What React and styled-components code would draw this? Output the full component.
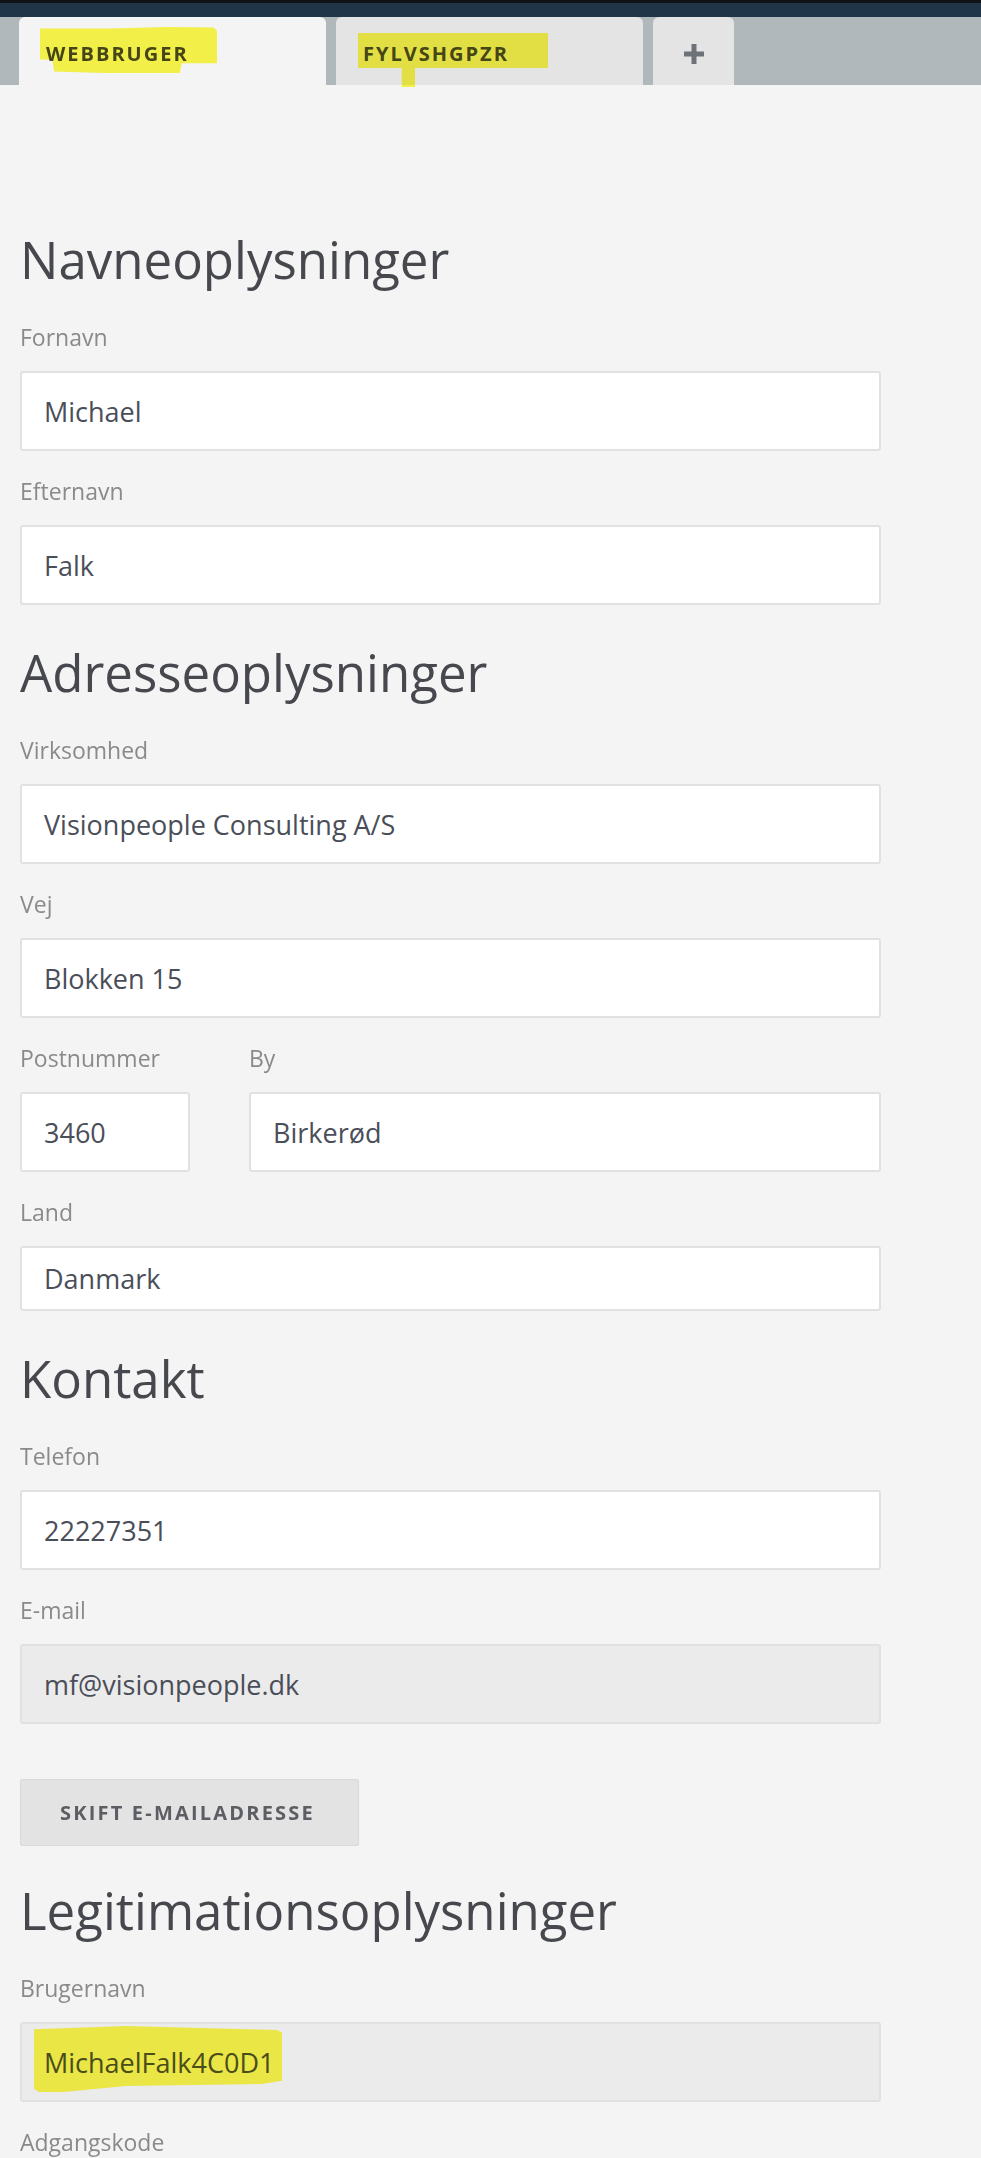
import React from 'react';
import styled, { createGlobalStyle } from 'styled-components';

const GlobalStyle = createGlobalStyle`
  html, body {
    margin: 0;
    padding: 0;
  }
  body {
    background: #f4f4f4;
    font-family: 'Open Sans', 'Noto Sans', Arial, sans-serif;
  }
`;

const TopBar = styled.div`
  height: 14px;
  background: #213549;
  border-top: 3px solid #0f1317;
`;

const TabStrip = styled.nav`
  display: flex;
  gap: 10px;
  height: 68px;
  padding-left: 19px;
  background: #b0b8bb;
`;

const Tab = styled.div`
  position: relative;
  display: flex;
  align-items: center;
  justify-content: ${p => (p.$center ? 'center' : 'flex-start')};
  box-sizing: border-box;
  width: ${p => p.$width}px;
  padding: 6px 0 0 ${p => (p.$center ? 0 : 27)}px;
  background: ${p => (p.$active ? '#f4f4f4' : '#e4e4e4')};
  border-radius: 6px 6px 0 0;
`;

const TabText = styled.span`
  font-size: 20px;
  line-height: 24px;
  font-weight: 700;
  letter-spacing: 2px;
  color: #45464a;
`;

// highlighter pen strokes drawn over the screenshot
const Marker = styled.span`
  position: absolute;
  left: ${p => p.$x}px;
  top: ${p => p.$y}px;
  width: ${p => p.$w}px;
  height: ${p => p.$h}px;
  background: #fdfa4c;
  mix-blend-mode: multiply;
  clip-path: polygon(${p => p.$shape});
  pointer-events: none;
`;

const Main = styled.main`
  display: flex;
  flex-direction: column;
  width: 861px;
  padding: 135px 20px 40px;
`;

const SectionTitle = styled.h2`
  margin: 9px 0 36px;
  font-size: 51px;
  line-height: 60px;
  font-weight: 400;
  color: #46484e;
`;

const Field = styled.div`
  margin-bottom: 28px;
`;

const FieldRow = styled.div`
  display: grid;
  grid-template-columns: 170px 1fr;
  column-gap: 59px;
`;

const Label = styled.label`
  display: block;
  margin-bottom: 22px;
  font-size: 23px;
  line-height: 24px;
  color: #8a8a8c;
`;

const InputBox = styled.div`
  position: relative;
  display: flex;
  align-items: center;
  box-sizing: border-box;
  height: ${p => p.$height || 80}px;
  padding: 0 22px;
  background: ${p => (p.$disabled ? '#ebebeb' : '#ffffff')};
  border: 2px solid #e1e1e1;
  border-radius: 3px;
  font-size: 27px;
  color: #4a4e59;
`;

const Button = styled.button`
  align-self: flex-start;
  box-sizing: border-box;
  width: 339px;
  height: 67px;
  margin: 27px 0 25px;
  padding: 0 0 0 39px;
  text-align: left;
  background: #e3e3e3;
  border: 1px solid #d9d9d9;
  border-radius: 2px;
  font-family: inherit;
  font-size: 20px;
  font-weight: 700;
  letter-spacing: 2.2px;
  color: #5c5e63;
`;

const PlusIcon = () => (
  <svg width="22" height="22" viewBox="0 0 22 22">
    <rect x="8.5" y="1" width="5" height="20" fill="#6c7278" />
    <rect x="1" y="8.5" width="20" height="5" fill="#6c7278" />
  </svg>
);

const Input = ({ label, value, height, disabled, children }) => (
  <Field>
    <Label>{label}</Label>
    <InputBox $height={height} $disabled={disabled}>
      {value}
      {children}
    </InputBox>
  </Field>
);

export default function App() {
  return (
    <>
      <GlobalStyle />
      <TopBar />
      <TabStrip>
        <Tab $active $width={307}>
          <TabText>WEBBRUGER</TabText>
          <Marker
            $x={21}
            $y={10}
            $w={177}
            $h={46}
            $shape="0% 3%, 40% 3%, 72% 0%, 98% 1%, 100% 8%, 100% 79%, 80% 79%, 79% 100%, 36% 100%, 8% 97%, 7% 72%, 0% 70%"
          />
        </Tab>
        <Tab $width={307}>
          <TabText>FYLVSHGPZR</TabText>
          <Marker
            $x={22}
            $y={16}
            $w={190}
            $h={54}
            $shape="0% 0%, 100% 0%, 100% 65%, 30% 65%, 30% 100%, 23% 100%, 23% 65%, 0% 65%"
          />
        </Tab>
        <Tab $center $width={81}>
          <PlusIcon />
        </Tab>
      </TabStrip>

      <Main>
        <SectionTitle>Navneoplysninger</SectionTitle>
        <Input label="Fornavn" value="Michael" />
        <Input label="Efternavn" value="Falk" />

        <SectionTitle>Adresseoplysninger</SectionTitle>
        <Input label="Virksomhed" value="Visionpeople Consulting A/S" />
        <Input label="Vej" value="Blokken 15" />
        <FieldRow>
          <Input label="Postnummer" value="3460" />
          <Input label="By" value="Birkerød" />
        </FieldRow>
        <Input label="Land" value="Danmark" height={65} />

        <SectionTitle>Kontakt</SectionTitle>
        <Input label="Telefon" value="22227351" />
        <Input label="E-mail" value="mf@visionpeople.dk" disabled />
        <Button>SKIFT E-MAILADRESSE</Button>

        <SectionTitle>Legitimationsoplysninger</SectionTitle>
        <Input label="Brugernavn" value="MichaelFalk4C0D1" disabled>
          <Marker
            $x={12}
            $y={2}
            $w={248}
            $h={66}
            $shape="0% 5%, 37% 0%, 67% 3%, 98% 6%, 100% 10%, 100% 83%, 92% 88%, 37% 91%, 12% 100%, 2% 100%, 0% 95%"
          />
        </Input>
        <Input label="Adgangskode" value="" />
      </Main>
    </>
  );
}
